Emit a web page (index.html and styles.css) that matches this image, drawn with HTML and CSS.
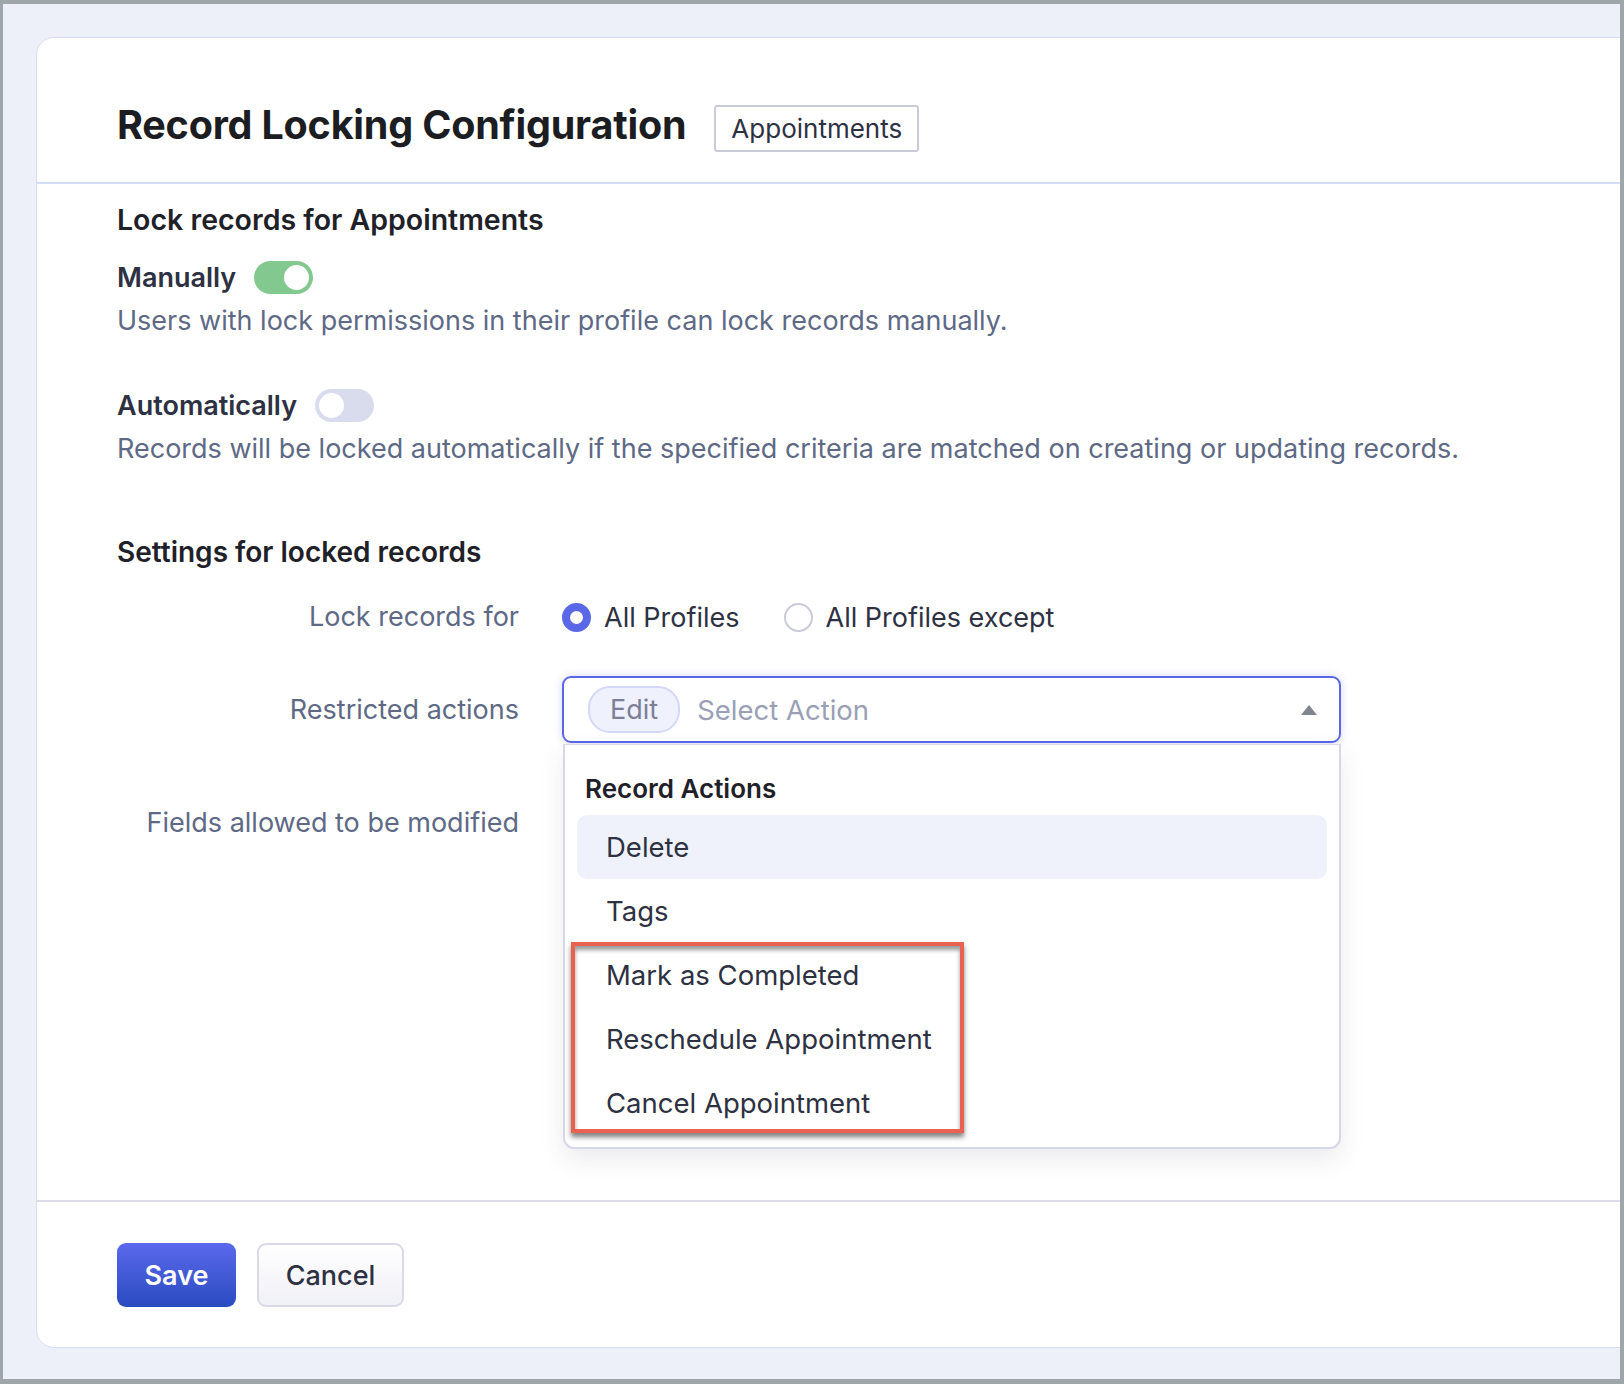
FILE: index.html
```html
<!DOCTYPE html>
<html>
<head>
  <title>Record Locking Configuration</title>
  <link rel="stylesheet" href="styles.css">
</head>
<body>

  <div class="frame">
    <div class="card">

      <div class="card-header">
        <h1>Record Locking Configuration</h1>
        <span class="module-tag">Appointments</span>
      </div>

      <div class="card-body">
        <h2>Lock records for Appointments</h2>

        <div class="switch-row">
          <span class="switch-label">Manually</span>
          <span class="toggle on"><span class="knob"></span></span>
        </div>
        <p class="hint">Users with lock permissions in their profile can lock records manually.</p>

        <div class="switch-row spaced">
          <span class="switch-label">Automatically</span>
          <span class="toggle"><span class="knob"></span></span>
        </div>
        <p class="hint">Records will be locked automatically if the specified criteria are matched on creating or updating records.</p>

        <h2 class="settings-title">Settings for locked records</h2>

        <div class="form-row profiles-row">
          <div class="field-label">Lock records for</div>
          <div class="radios">
            <label class="radio checked"><span class="dot"></span>All Profiles</label>
            <label class="radio"><span class="dot"></span>All Profiles except</label>
          </div>
        </div>

        <div class="form-row actions-row">
          <div class="field-label">Restricted actions</div>
          <div class="select-wrap">
            <div class="select-box">
              <span class="chip">Edit</span>
              <span class="placeholder">Select Action</span>
              <span class="caret"></span>
            </div>

            <!-- open dropdown -->
            <div class="dropdown">
              <div class="group-title">Record Actions</div>
              <ul class="option-list">
                <li class="active">Delete</li>
                <li>Tags</li>
                <li>Mark as Completed</li>
                <li>Reschedule Appointment</li>
                <li>Cancel Appointment</li>
                <div class="callout"></div>
              </ul>
            </div>
          </div>
        </div>

        <div class="form-row fields-row">
          <div class="field-label">Fields allowed to be modified</div>
        </div>
      </div>

      <div class="card-footer">
        <button class="btn btn-save">Save</button>
        <button class="btn btn-cancel">Cancel</button>
      </div>

    </div>
  </div>

</body>
</html>
```

FILE: styles.css
```css
html, body {
  margin: 0;
  height: 100%;
}

body {
  font-family: Inter, "Noto Sans", sans-serif;
  background-color: #9ea6a9;
  padding: 4px 4px 5px 3px;
  box-sizing: border-box;
  overflow: hidden;
}

.frame {
  height: 100%;
  background-color: #edf0f8;
  padding: 33px 0 0 33px;
  box-sizing: border-box;
  overflow: hidden;
}

.card {
  background: #fff;
  border: 1px solid #d9ddf3;
  border-radius: 18px;
  margin-right: -30px;
  height: 1311px;
  box-sizing: border-box;
}

/* Header */
.card-header {
  display: flex;
  align-items: center;
  height: 146px;
  padding: 30px 80px 0;
  box-sizing: border-box;
  border-bottom: 2px solid #d5dcf6;
}

h1 {
  margin: 0;
  font-size: 39.5px;
  font-weight: 700;
  color: #1c1d22;
  letter-spacing: -0.2px;
}

.module-tag {
  margin-left: 28px;
  margin-top: 6px;
  padding: 6px 15px;
  border: 2px solid #cacbd9;
  border-radius: 3px;
  font-size: 26px;
  color: #2d3142;
}

/* Body */
.card-body {
  height: 1018px;
  padding: 18px 80px 0;
  box-sizing: border-box;
  border-bottom: 2px solid #dcdced;
}

h2 {
  margin: 0;
  font-size: 28.5px;
  line-height: 36px;
  font-weight: 600;
  color: #1f2129;
}

.settings-title {
  margin-top: 68px;
  font-size: 28px;
}

.switch-row {
  display: flex;
  align-items: center;
  margin-top: 21px;
  height: 36px;
}

.switch-row.spaced {
  margin-top: 49px;
}

.switch-label {
  font-size: 27px;
  font-weight: 600;
  color: #2d3142;
  margin-right: 18px;
}

.toggle {
  position: relative;
  width: 59px;
  height: 33px;
  border-radius: 17px;
  background-color: #d9dcec;
}

.toggle .knob {
  position: absolute;
  top: 4px;
  left: 4px;
  width: 25px;
  height: 25px;
  border-radius: 50%;
  background: #fff;
}

.toggle.on {
  background-color: #82c88f;
}

.toggle.on .knob {
  left: 30px;
}

.hint {
  margin: 9px 0 0;
  font-size: 27px;
  line-height: 34px;
  color: #5e6985;
}

/* Form rows */
.form-row {
  display: flex;
  align-items: center;
}

.field-label {
  width: 402px;
  text-align: right;
  font-size: 27px;
  line-height: 40px;
  color: #5e6985;
  margin-right: 43px;
  flex-shrink: 0;
}

.profiles-row {
  margin-top: 27px;
}

.radios {
  display: flex;
  align-items: center;
  gap: 44px;
}

.radio {
  display: flex;
  align-items: center;
  font-size: 27px;
  color: #2d3142;
}

.radio .dot {
  width: 25px;
  height: 25px;
  border-radius: 50%;
  border: 2px solid #c9cbd8;
  margin-right: 13px;
}

.radio.checked .dot {
  width: 13px;
  height: 13px;
  border: 8px solid #5a67e6;
}

.actions-row {
  margin-top: 39px;
}

.select-wrap {
  position: relative;
  width: 779px;
}

.select-box {
  display: flex;
  align-items: center;
  height: 67px;
  padding: 0 24px;
  box-sizing: border-box;
  border: 2px solid #5a67e6;
  border-radius: 9px;
  box-shadow: 0 0 8px rgba(90, 103, 230, 0.25);
}

.chip {
  padding: 5px 20px;
  border: 2px solid #d3d8f7;
  border-radius: 22px;
  background-color: #eff1fc;
  font-size: 27px;
  color: #7b8098;
}

.placeholder {
  margin-left: 17px;
  font-size: 27.5px;
  color: #9a9fb6;
  flex-grow: 1;
}

.caret {
  width: 0;
  height: 0;
  border-left: 8px solid transparent;
  border-right: 8px solid transparent;
  border-bottom: 10px solid #80858f;
  margin-right: -2px;
}

/* Dropdown */
.dropdown {
  position: absolute;
  top: 68px;
  left: 1px;
  right: 0;
  background: #fff;
  border: 2px solid #d6d7e7;
  border-top-width: 1px;
  border-radius: 0 0 11px 11px;
  padding: 24px 12px 12px;
  box-shadow: 0 10px 24px rgba(60, 60, 90, 0.10);
  z-index: 5;
}

.group-title {
  padding-left: 8px;
  font-size: 26px;
  line-height: 40px;
  font-weight: 600;
  color: #1f2129;
  margin-bottom: 6px;
}

.option-list {
  list-style: none;
  margin: 0;
  padding: 0;
  position: relative;
}

.option-list li {
  height: 64px;
  line-height: 64px;
  padding-left: 29px;
  font-size: 27.5px;
  color: #2d3142;
  border-radius: 10px;
}

.option-list li.active {
  background-color: #eff2fb;
}

/* annotation box around the appointment actions */
.callout {
  position: absolute;
  top: 127px;
  left: -6px;
  width: 393px;
  height: 191px;
  box-sizing: border-box;
  border: 4px solid #e8624f;
  box-shadow: 0 4px 5px rgba(0, 0, 0, 0.5), inset 0 4px 4px rgba(0, 0, 0, 0.4);
}

.fields-row {
  margin-top: 60px;
}

/* Footer */
.card-footer {
  display: flex;
  align-items: center;
  padding: 41px 80px 0;
  gap: 21px;
}

.btn {
  height: 64px;
  border-radius: 9px;
  font-family: Inter, "Noto Sans", sans-serif;
  font-size: 27px;
  cursor: pointer;
}

.btn-save {
  width: 119px;
  border: none;
  color: #fff;
  font-weight: 600;
  background: linear-gradient(#5b69ec, #2a4bc0);
}

.btn-cancel {
  width: 147px;
  border: 2px solid #d9d9e8;
  color: #2d3142;
  font-weight: 500;
  background: linear-gradient(#ffffff, #f0f0f7);
}
```
